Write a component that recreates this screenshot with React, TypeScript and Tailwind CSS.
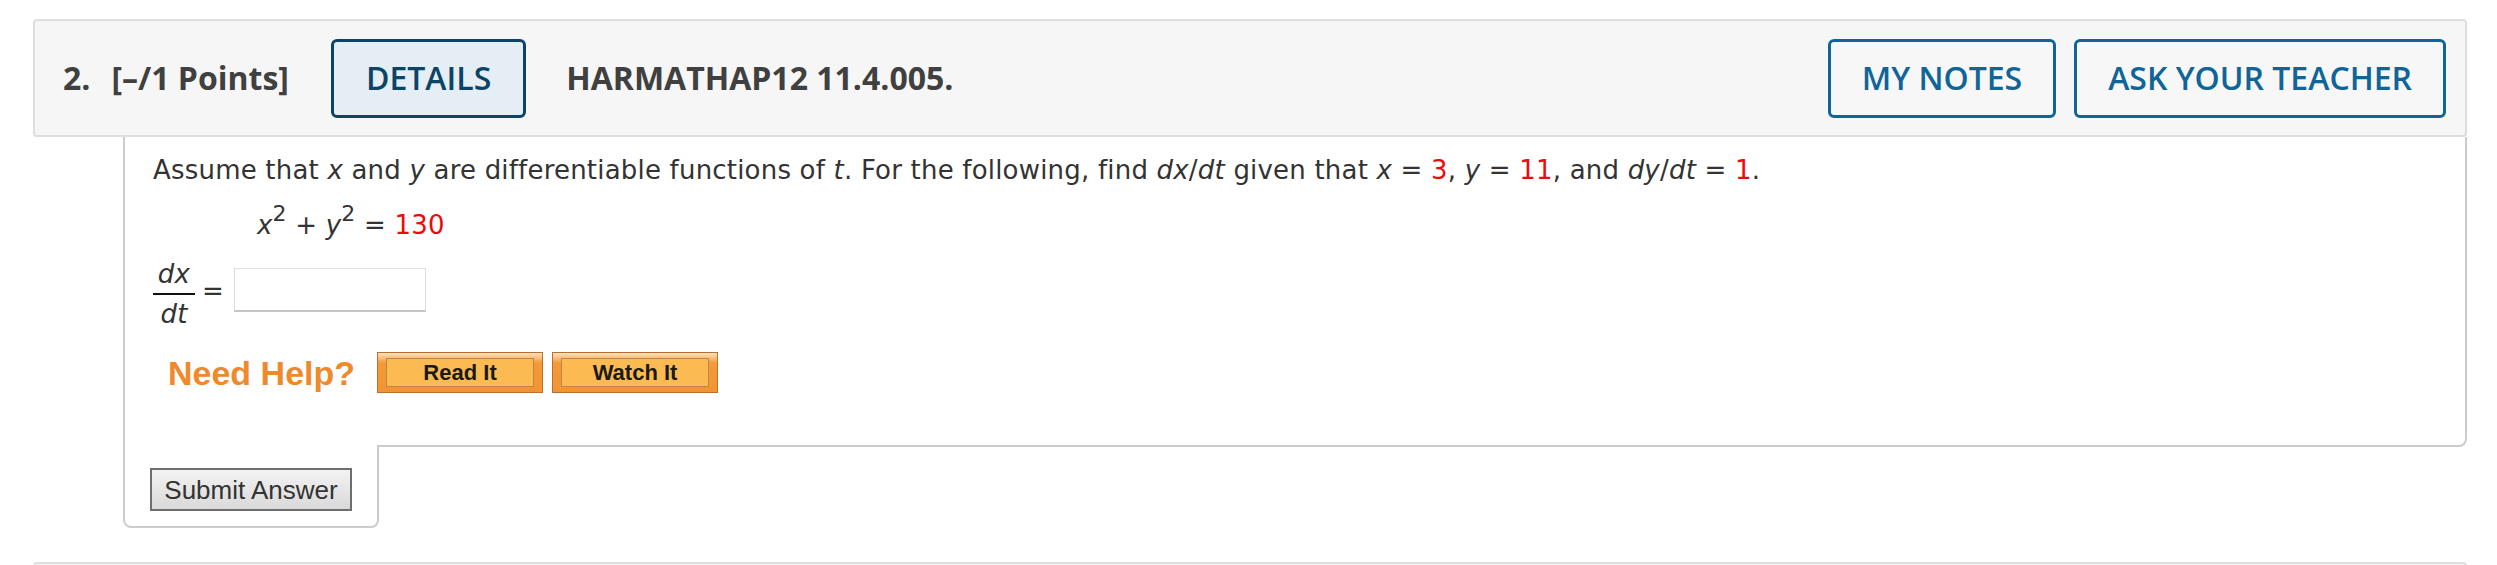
import React from 'react'

const RED = 'text-[#ee0a0a]'

function HeaderButton({ label, active }: { label: string; active?: boolean }) {
  return (
    <button
      className={
        active
          ? 'h-[79px] px-[32px] rounded-[6px] border-[3px] border-[#0b4466] bg-[#e5eef5] text-[#0b4466] text-[32px] font-semibold'
          : 'h-[79px] px-[31px] rounded-[6px] border-[3px] border-[#0f6597] bg-[#f7f7f7] text-[#0f6597] text-[32px] font-semibold'
      }
    >
      {label}
    </button>
  )
}

function HelpButton({ label }: { label: string }) {
  return (
    <button className="w-[166px] h-[41px] border border-[#b5712f] bg-linear-to-b from-[#fde2ba] from-0% via-[#f49a38] via-25% to-[#f29434] px-[8px] py-[5px]">
      <div className="w-full h-full border border-[#bf8646] bg-[#fbbb52] flex items-center justify-center font-['Liberation_Sans',Arial,sans-serif] font-bold text-[22px] text-[#1c1a14]">
        {label}
      </div>
    </button>
  )
}

export default function App() {
  return (
    <div className="w-[2497px] h-[565px] overflow-hidden bg-white">
      <div className="w-[2467px] pl-[33px] pt-[19px]">
        {/* question header */}
        <div className="h-[118px] border-2 border-[#dedede] rounded-[4px] bg-[#f6f6f6] flex items-center pl-[28px] pr-[19px] font-['Open_Sans',sans-serif]">
          <span className="text-[32px] font-bold text-[#404040]">2.</span>
          <span className="ml-[21px] text-[32px] font-bold text-[#404040]">[–/1 Points]</span>
          <div className="ml-[42px]">
            <HeaderButton label="DETAILS" active />
          </div>
          <span className="ml-[40px] text-[32px] font-bold text-[#404040]">HARMATHAP12 11.4.005.</span>
          <div className="ml-auto flex gap-[18px]">
            <HeaderButton label="MY NOTES" />
            <HeaderButton label="ASK YOUR TEACHER" />
          </div>
        </div>

        {/* question body */}
        <div className="ml-[90px] w-[2344px]">
          <div className="h-[310px] border-x-2 border-b-2 border-[#cccccc] rounded-br-[8px] pl-[28px] pt-[18px] font-['DejaVu_Sans',Verdana,sans-serif] text-[26px] text-[#333333] tracking-[0.2px]">
            <p className="leading-[30px] whitespace-nowrap">
              Assume that <i>x</i> and <i>y</i> are differentiable functions of <i>t</i>. For the following, find{' '}
              <i>dx</i>/<i>dt</i> given that <i>x</i> = <span className={RED}>3</span>, <i>y</i> ={' '}
              <span className={RED}>11</span>, and <i>dy</i>/<i>dt</i> = <span className={RED}>1</span>.
            </p>

            <div className="mt-[25px] pl-[104px] h-[30px] leading-[30px] whitespace-nowrap">
              <i>x</i>
              <span className="text-[22px] leading-[0] align-[13px]">2</span> + <i>y</i>
              <span className="text-[22px] leading-[0] align-[13px]">2</span> = <span className={RED}>130</span>
            </div>

            <div className="mt-[19px] flex items-center">
              <div className="flex flex-col items-center w-[42px] italic">
                <span className="leading-[30px]">dx</span>
                <div className="mt-[4px] w-[42px] border-t-2 border-[#111111]" />
                <span className="mt-[4px] leading-[30px]">dt</span>
              </div>
              <span className="ml-[7px] mb-[6px] leading-[30px]">=</span>
              <input
                type="text"
                className="ml-[10px] mb-[8px] w-[192px] h-[44px] border border-[#dddddd] border-b-2 border-b-[#c6c6c6] bg-white outline-none"
              />
            </div>

            <div className="mt-[23px] pl-[15px] h-[41px] flex items-center">
              <span className="font-['Liberation_Sans',Arial,sans-serif] font-bold text-[34px] text-[#ef8a2c] leading-none tracking-normal">
                Need Help?
              </span>
              <div className="ml-[22px] flex gap-[9px] tracking-normal">
                <HelpButton label="Read It" />
                <HelpButton label="Watch It" />
              </div>
            </div>
          </div>

          <div className="relative -mt-[2px] w-[256px] h-[83px] bg-white border-x-2 border-b-2 border-[#cccccc] rounded-b-[8px] pl-[25px] pt-[23px]">
            <button className="w-[202px] h-[43px] border-2 border-[#6e6e6e] bg-linear-to-b from-[#f3f3f3] to-[#d9d9d9] font-['Liberation_Sans',Arial,sans-serif] text-[26px] text-[#333333] leading-none">
              Submit Answer
            </button>
          </div>
        </div>

        {/* next question header (cut off) */}
        <div className="mt-[34px] h-[118px] border-2 border-[#dedede] rounded-[4px] bg-[#f6f6f6]" />
      </div>
    </div>
  )
}
